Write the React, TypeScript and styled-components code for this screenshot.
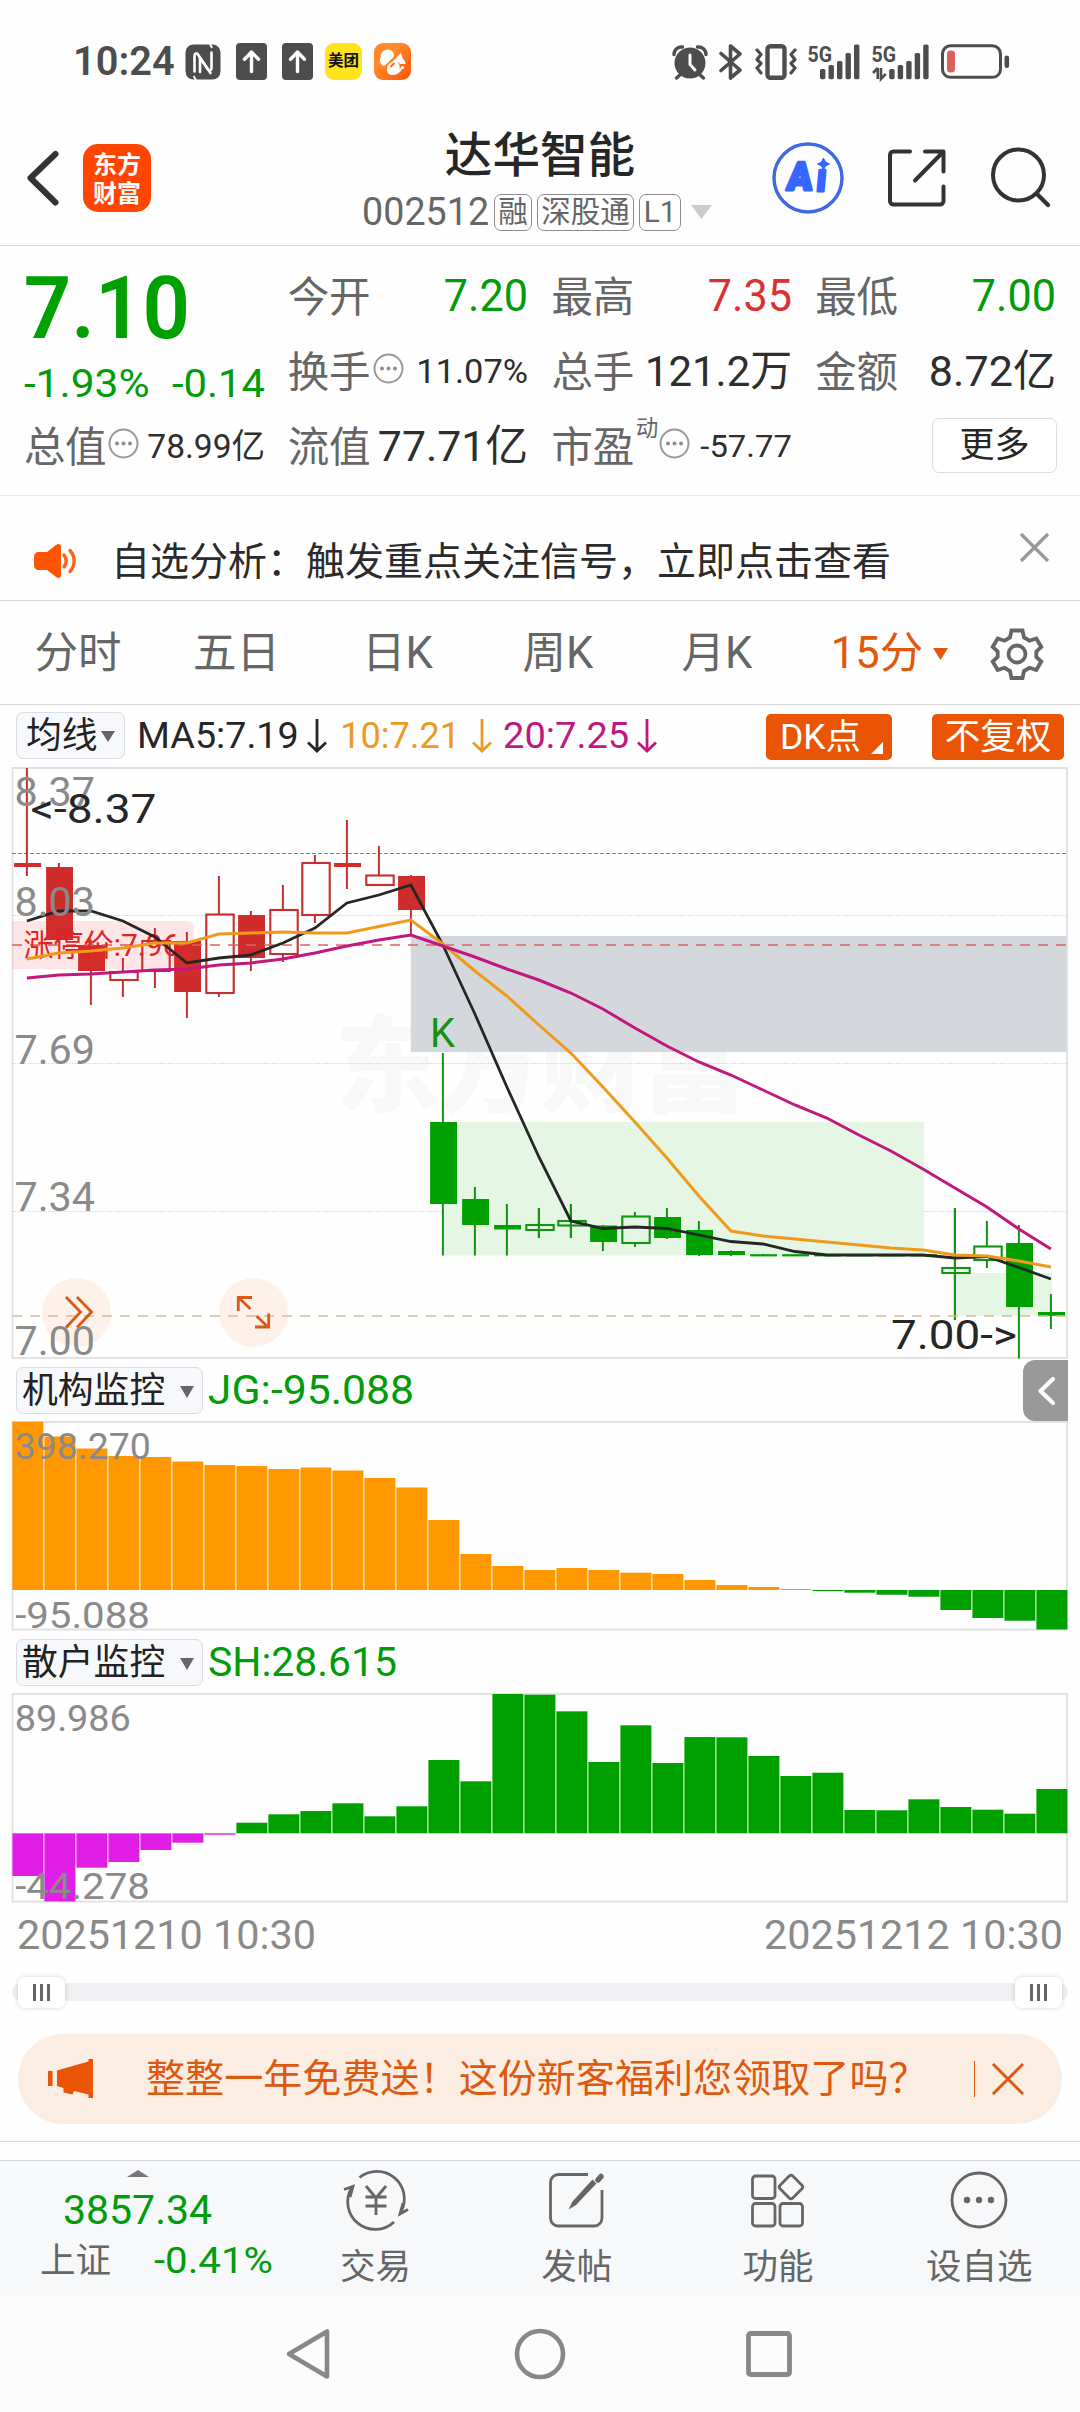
import React, { useLayoutEffect, useRef, useState } from "react";
import styled, { createGlobalStyle } from "styled-components";

const FONT = `Roboto, "Noto Sans CJK SC", "Noto Sans", sans-serif`;
const GREEN = "#009c0a";
const SOLID_GREEN = "#00a000";
const ORANGE = "#e95504";
const GRAY = "#666666";
const AXIS = "#8a8a8a";

const GlobalStyle = createGlobalStyle`
  * { box-sizing: border-box; }
  body { margin: 0; background: #fefefe; }
  svg { display: block; flex: none; overflow: visible; }
`;

const Page = styled.main`
  width: 1080px;
  height: 2412px;
  display: flex;
  flex-direction: column;
  background: #fefefe;
  font-family: ${FONT};
  overflow: hidden;
`;

/* ---------- fitted text ---------- */

const FitBox = styled.span<{ $w: number; $size: number; $color: string; $weight: number }>`
  display: block;
  flex: none;
  width: ${(p) => p.$w}px;
  height: ${(p) => p.$size}px;
  line-height: ${(p) => p.$size}px;
  font-size: ${(p) => p.$size}px;
  font-weight: ${(p) => p.$weight};
  color: ${(p) => p.$color};
  white-space: nowrap;
`;

const FitInner = styled.span`
  display: inline-block;
  vertical-align: top;
  line-height: inherit;
  transform-origin: 0 50%;
`;

type FitProps = { w: number; size: number; color?: string; weight?: number; children: string };

/* Condenses or widens its text so that it fills exactly the given width. */
function Fit({ w, size, color = "#2e2e2e", weight = 400, children }: FitProps) {
  const ref = useRef<HTMLSpanElement>(null);
  const [scale, setScale] = useState(1);
  useLayoutEffect(() => {
    if (ref.current) setScale(w / (ref.current.offsetWidth - size * 0.1));
  }, [w, size, children]);
  return (
    <FitBox $w={w} $size={size} $color={color} $weight={weight}>
      <FitInner ref={ref} style={{ transform: `translateX(${-size * 0.05 * scale}px) scaleX(${scale})` }}>
        {children}
      </FitInner>
    </FitBox>
  );
}

/* ---------- status bar ---------- */

const StatusBar = styled.header`
  height: 100px;
  padding: 23px 70px 0 75px;
  display: flex;
  align-items: center;
  justify-content: space-between;
`;

const StatusGroup = styled.div<{ $gap: number }>`
  display: flex;
  align-items: center;
  gap: ${(p) => p.$gap}px;
`;

const UploadBadge = styled.span`
  width: 31px;
  height: 37px;
  margin-left: 3px;
  border-radius: 4px;
  background: #4d4d4d;
`;

const AppBadge = styled.span<{ $bg: string }>`
  width: 37px;
  height: 37px;
  border-radius: 9px;
  background: ${(p) => p.$bg};
  display: flex;
  align-items: center;
  justify-content: center;
  font-size: 15.5px;
  font-weight: 700;
  line-height: 1;
  color: #111;
  white-space: nowrap;
`;

const UploadIcon = () => (
  <UploadBadge>
    <svg width="31" height="37" viewBox="0 0 31 37">
      <path d="M15.5 28.5V10M8.5 16.2l7-7.2 7 7.2" fill="none" stroke="#fff" strokeWidth="3.4" strokeLinecap="round" strokeLinejoin="round" />
    </svg>
  </UploadBadge>
);

const signalBars = [10.3, 14.3, 18.3, 26.3, 34.7];

const Signal = ({ data }: { data?: boolean }) => (
  <svg width={data ? 57 : 52} height="36" viewBox={`0 0 ${data ? 57 : 52} 36`} fill="#4d4d4d">
    <text x="-0.5" y="17.5" fontFamily="Roboto, sans-serif" fontWeight="700" fontSize="22.5" textLength="24.5" lengthAdjust="spacingAndGlyphs">5G</text>
    {signalBars.map((h, i) => (
      <rect key={h} x={(data ? 17.2 : 12) + i * 8.5} y={35.2 - h} width="5.4" height={h} rx="1.6" />
    ))}
    {data && <path d="M5.8 24v11M1 29l4.8-5M9 24v11l4.8-5.2" fill="none" stroke="#4d4d4d" strokeWidth="2.6" />}
  </svg>
);

/* ---------- title bar ---------- */

const TitleBar = styled.nav`
  height: 146px;
  display: grid;
  grid-template-columns: 1fr 380px 1fr;
  border-bottom: 1px solid #d6d6d6;
`;

const TitleSide = styled.div<{ $end?: boolean }>`
  display: flex;
  align-items: center;
  justify-content: ${(p) => (p.$end ? "flex-end" : "flex-start")};
  padding: ${(p) => (p.$end ? "11px 30px 0 0" : "11px 0 0 26px")};
`;

const BrandLogo = styled.div`
  width: 68px;
  height: 68px;
  margin-left: 24px;
  border-radius: 15px;
  background: #ff4500;
  color: #fff;
  display: flex;
  flex-direction: column;
  align-items: center;
  padding-top: 7px;
  font-size: 24px;
  line-height: 29px;
  font-weight: 700;
`;

const TitleCenter = styled.div`
  display: flex;
  flex-direction: column;
  align-items: center;
  padding-top: 32px;
`;

const StockName = styled.h1`
  margin: 0;
  font-size: 47.6px;
  line-height: 48px;
  font-weight: 500;
  color: #262626;
`;

const CodeRow = styled.div`
  margin-top: 14px;
  height: 36px;
  display: flex;
  align-items: center;
  align-self: flex-start;
  padding-left: 14px;
`;

const Tag = styled.span<{ $w: number; $ml: number }>`
  width: ${(p) => p.$w}px;
  height: 37px;
  margin-left: ${(p) => p.$ml}px;
  border: 1px solid #8c8c8c;
  border-radius: 7px;
  display: flex;
  align-items: center;
  justify-content: center;
  font-size: 29.5px;
  line-height: 1;
  padding-top: 2px;
  color: ${GRAY};
  white-space: nowrap;
`;

const TriangleSlot = styled.span`
  margin-left: 10px;
`;

const HeaderIcons = styled.div`
  display: flex;
  align-items: center;
  gap: 43px;
`;

/* ---------- quote ---------- */

const Quote = styled.section`
  height: 250px;
  padding: 12px 26px 0;
  display: grid;
  grid-template-columns: repeat(4, 236.6px);
  grid-template-rows: repeat(3, 75px);
  column-gap: 27.2px;
  border-bottom: 1px solid #e8e8e8;
`;

const PriceBlock = styled.div`
  grid-row: span 2;
  display: flex;
  flex-direction: column;
  gap: 13px;
  padding: 6px 0 0 2px;
`;

const ChangeRow = styled.div`
  display: flex;
  justify-content: space-between;
  margin-left: -2px;
`;

const Cell = styled.div`
  display: flex;
  align-items: center;
  min-width: 0;
`;

const CellLabel = styled.span`
  margin-left: -2px;
  font-size: 41.5px;
  line-height: 42px;
  letter-spacing: -0.4px;
  color: ${GRAY};
  padding-top: 4px;
  white-space: nowrap;
`;

const CellValue = styled.div`
  margin-left: auto;
  padding-top: 1px;
`;

const Super = styled.sup`
  align-self: flex-start;
  margin: 9px 0 0 2px;
  font-size: 22.5px;
  line-height: 23px;
  color: ${GRAY};
`;

const MoreButton = styled.button`
  width: 125px;
  height: 55px;
  margin: 0 -3px 0 auto;
  padding: 0 0 1px;
  border: 1.5px solid #dedede;
  border-radius: 7px;
  background: #fff;
  font: 400 35px/1 ${FONT};
  color: #262626;
`;

const InfoSvg = styled.svg<{ $ml: number }>`
  margin-left: ${(p) => p.$ml}px;
  margin-top: -4px;
`;

const InfoDot = ({ ml }: { ml: number }) => (
  <InfoSvg $ml={ml} width="31" height="31" viewBox="0 0 31 31">
    <circle cx="15.5" cy="15.5" r="14" fill="none" stroke="#999" strokeWidth="2" />
    {[9, 15.5, 22].map((x) => (
      <circle key={x} cx={x} cy="15.5" r="2" fill="#8c8c8c" />
    ))}
  </InfoSvg>
);

/* ---------- notice, tabs ---------- */

const Notice = styled.section`
  height: 105px;
  padding: 25px 31px 0 34px;
  display: flex;
  align-items: center;
  border-bottom: 1px solid #d6d6d6;
`;

const NoticeText = styled.p`
  margin: 3px 0 0 32px;
  flex: 1;
  font-size: 39px;
  line-height: 40px;
  color: #2b2b2b;
  white-space: nowrap;
`;

const NoticeClose = styled.svg`
  margin-top: -27px;
`;

const Tabs = styled.nav`
  height: 104px;
  display: grid;
  grid-template-columns: 158px 159px 163px 158px 160px 185px 70px;
  border-bottom: 1px solid #d6d6d6;
`;

const Tab = styled.div<{ $active?: boolean }>`
  display: flex;
  align-items: center;
  justify-content: center;
  gap: 10px;
  padding: 3px 2px 0 0;
  font-size: 43.5px;
  line-height: 1;
  color: ${(p) => (p.$active ? "#e0580c" : GRAY)};
  white-space: nowrap;
`;

/* ---------- charts ---------- */

const LegendBar = styled.div`
  height: 61px;
  padding-left: 16px;
  display: flex;
  align-items: center;
`;

const Picker = styled.div<{ $w: number; $pad: number; $gap: number }>`
  width: ${(p) => p.$w}px;
  height: 47px;
  display: flex;
  align-items: center;
  gap: ${(p) => p.$gap}px;
  padding: 2px 0 0 ${(p) => p.$pad}px;
  margin-right: ${(p) => (p.$gap > 8 ? 7 : 14)}px;
  flex: none;
  border: 1px solid #dadde1;
  border-radius: 7px;
  background: #f7f8fb;
  font-size: 35.8px;
  line-height: 1;
  color: #222;
  white-space: nowrap;
`;

const Legend = styled.div<{ $gap: number; $mr: number }>`
  display: flex;
  align-items: center;
  gap: ${(p) => p.$gap}px;
  margin-right: ${(p) => p.$mr}px;
`;

const Chip = styled.button<{ $w: number; $left?: boolean }>`
  width: ${(p) => p.$w}px;
  height: 46px;
  padding: ${(p) => (p.$left ? "0 0 0 14px" : "0")};
  margin: 2px 0 0;
  border: 0;
  border-radius: 5px;
  background: ${ORANGE};
  color: #fff;
  font: 400 35.5px/46px ${FONT};
  display: flex;
  align-items: flex-end;
  justify-content: ${(p) => (p.$left ? "flex-start" : "center")};
  gap: 10px;
  white-space: nowrap;
`;

const CornerMark = styled.svg`
  margin-bottom: 6px;
`;

const Chips = styled.div`
  display: flex;
  gap: 40px;
  margin-left: auto;
  padding-right: 16px;
`;

const ChartFrame = styled.section<{ $h: number }>`
  position: relative;
  height: ${(p) => p.$h}px;
  flex: none;
`;

const ChartSvg = styled.svg`
  position: relative;
`;

const RoundButton = styled.button<{ $x: number }>`
  position: absolute;
  left: ${(p) => p.$x}px;
  bottom: 13px;
  width: 69px;
  height: 69px;
  padding: 0;
  border: 0;
  border-radius: 50%;
  background: #fef1e9;
`;

const SideToggle = styled.button`
  width: 45px;
  height: 61px;
  margin: 0 12px 0 auto;
  padding: 0;
  border: 0;
  border-radius: 12px 0 0 12px;
  background: #999;
`;

const Dates = styled.div`
  height: 62px;
  padding: 0 19px;
  display: flex;
  align-items: center;
  justify-content: space-between;
`;

const SliderRow = styled.div`
  height: 52px;
  padding: 0 12px;
  display: flex;
  align-items: center;
`;

const Track = styled.div`
  flex: 1;
  height: 18px;
  border-radius: 9px;
  background: #f0f0f3;
  display: flex;
  align-items: center;
  justify-content: space-between;
  padding: 0 6px;
`;

const Thumb = styled.div`
  width: 47px;
  height: 31px;
  border-radius: 7px;
  background: #fff;
  box-shadow: 0 0 5px rgba(0, 0, 0, 0.16);
  display: flex;
  align-items: center;
  justify-content: center;
  gap: 4.6px;
`;

const Grip = styled.i`
  width: 2.5px;
  height: 17px;
  background: #666;
`;

const Promo = styled.aside`
  height: 90px;
  margin: 16px 18px 17px;
  padding: 0 38px 0 30px;
  border-radius: 45px;
  background: #fcede3;
  display: flex;
  align-items: center;
`;

const PromoText = styled.p`
  margin: 0 0 0 52px;
  flex: 1;
  font-size: 39.1px;
  line-height: 40px;
  color: #dc5a10;
  white-space: nowrap;
`;

const PromoRule = styled.span`
  width: 1px;
  height: 36px;
  margin-right: 17px;
  background: #dc5a10;
`;

/* ---------- bottom ---------- */

const Gap = styled.div`
  height: 19px;
  border-top: 1px solid #d2d5d8;
`;

const BottomBar = styled.nav`
  height: 136px;
  display: grid;
  grid-template-columns: 275px repeat(4, 201.2px);
  border-top: 1px solid #d0d4d8;
  background: #f7f8fa;
`;

const IndexBlock = styled.div`
  display: flex;
  flex-direction: column;
  align-items: center;
  gap: 13px;
  padding-top: 9px;
`;

const IndexRow = styled.div`
  width: 275px;
  padding: 0 4px 0 40px;
  margin-top: -2px;
  display: flex;
  align-items: center;
  justify-content: space-between;
`;

const IndexName = styled.span`
  font-size: 35.5px;
  line-height: 36px;
  padding-top: 1px;
  color: ${GRAY};
`;

const BottomItem = styled.div`
  display: flex;
  flex-direction: column;
  align-items: center;
  padding-top: 10px;
  gap: 20px;
  font-size: 35.5px;
  line-height: 36px;
  color: ${GRAY};
`;

const SystemNav = styled.footer`
  height: 116px;
  display: flex;
  align-items: center;
  justify-content: center;
  gap: 180px;
  background: #fcfcfc;
`;

const Down = ({ w, h, color }: { w: number; h: number; color: string }) => (
  <svg width={w} height={h} viewBox="0 0 10 10" preserveAspectRatio="none">
    <path d="M0 0h10L5 10z" fill={color} />
  </svg>
);

const DownArrow = ({ color }: { color: string }) => (
  <svg width="20" height="34" viewBox="0 0 20 34">
    <path d="M10 0v32M1 23.5l9 8.5 9-8.5" fill="none" stroke={color} strokeWidth="2.8" />
  </svg>
);

/* ---------- chart data (in screen units) ---------- */

const cx = (i: number) => 26.9 + 32 * i;

type Candle = [high: number, top: number, bottom: number, low: number, hollow?: 1];

const candles: Candle[] = [
  [768, 863, 867, 876], [863, 867, 940, 940], [940, 945, 971, 1005], [958, 972, 980, 997, 1],
  [928, 941, 971, 988, 1], [932, 941, 992, 1018], [876, 914.5, 993, 997, 1], [911, 915, 958, 971],
  [885, 910, 954, 962, 1], [855, 863, 915, 923, 1], [820, 863, 867, 889], [846, 875.5, 885, 885, 1],
  [875, 876, 910, 936], [1053, 1122, 1204, 1255.5], [1187, 1199, 1225, 1255.5], [1204, 1225, 1229.5, 1255.5],
  [1208, 1225, 1230, 1238, 1], [1204, 1221, 1225.5, 1238, 1], [1225, 1225.5, 1242, 1251], [1212, 1216.5, 1243, 1247, 1],
  [1208, 1217, 1238, 1239], [1221, 1230, 1255, 1256], [1250.5, 1251, 1255, 1256], [1254, 1254.2, 1256.4, 1256],
  [1254, 1254.2, 1256.4, 1256], [1254, 1254.2, 1256.4, 1256], [1254, 1254.2, 1256.4, 1256], [1254, 1254.2, 1256.4, 1256],
  [1254, 1254.2, 1256.4, 1256], [1208, 1268, 1273, 1320, 1], [1221, 1246.5, 1260, 1268, 1], [1225, 1243, 1307, 1358.5],
  [1294, 1312, 1315.8, 1329],
];

const ma5 = [921, 911, 911, 921, 937, 963, 958, 955, 943, 928, 903, 895, 885, 945, 1014, 1087, 1157, 1221, 1228.5, 1227, 1228.5, 1235, 1241.5, 1244, 1251.5, 1255, 1255, 1255, 1255, 1258, 1256.5, 1267.5, 1279];
const ma10 = [959, 953, 951, 948, 943, 943, 934, 933, 932, 933, 933, 926.5, 920, 944, 971, 996, 1025, 1053, 1087, 1122, 1158, 1196, 1231, 1236, 1239, 1242, 1245, 1248, 1250, 1255, 1256, 1261, 1267];
const ma20 = [978, 975, 974, 972, 970, 969, 965, 963, 959, 953, 946, 940, 935, 946, 957, 969, 980, 993, 1009, 1028, 1046, 1062, 1075, 1090, 1105, 1118, 1135, 1151, 1169, 1188, 1207, 1229, 1249];

const jg = [1421.7, 1436.5, 1448.5, 1456, 1457, 1461.5, 1465, 1466, 1469, 1467.5, 1470.5, 1478, 1487.5, 1520, 1554, 1566, 1570, 1568, 1570, 1572.7, 1574, 1580, 1585, 1587, 1589, 1591, 1592.7, 1594.7, 1596.7, 1610, 1618, 1620.7, 1629.5];
const sh = [1876, 1901.5, 1867.7, 1862, 1850, 1842.7, 1834.7, 1822.7, 1814.3, 1811, 1803.3, 1816.3, 1806.3, 1760, 1781.3, 1694, 1694.7, 1711.3, 1762, 1725.3, 1763, 1737, 1737.3, 1756, 1776, 1772.7, 1810, 1810.3, 1799.3, 1807, 1809.7, 1813.7, 1789];

const line = (ys: number[]) => ys.map((y, i) => `${cx(i)},${y}`).join(" ");

type LabelProps = { x: number; y: number; w: number; size?: number; color?: string; children: string };

const ChartText = ({ x, y, w, size = 40.5, color = AXIS, children }: LabelProps) => (
  <text x={x - size * 0.05} y={y} fontFamily={FONT} fontSize={size} fill={color} textLength={w + size * 0.1} lengthAdjust="spacingAndGlyphs">
    {children}
  </text>
);

const Frame = ({ top, bottom }: { top: number; bottom: number }) => (
  <path d={`M12.5 ${top}H1067V${bottom}H12.5z`} fill="none" stroke="#e2e2e2" strokeWidth="1.8" />
);

const PriceChart = () => (
  <ChartSvg width="1080" height="594" viewBox="0 766 1080 594">
    <text x="335" y="1103" fontFamily={FONT} fontWeight="900" fontSize="105" fill="#f8f8f8" textLength="412">东方财富</text>
    <Frame top={768} bottom={1358} />
    {[915.5, 1063.5, 1211.5].map((y) => (
      <path key={y} d={`M12 ${y}H1067`} stroke="#cfcfcf" strokeWidth="1" strokeDasharray="1.2 1.4" />
    ))}
    <rect x="410.8" y="936" width="656" height="116" fill="#d4d8dd" />
    <rect x="443" y="1122" width="481" height="133.5" fill="#e5f6e5" />
    <rect x="956" y="1273" width="96" height="43" fill="#e5f6e5" />
    <path d="M12 853.5H1067" stroke="#c5703a" strokeWidth="1.2" strokeDasharray="4 2" />
    {candles.map(([high, top, bottom, low, hollow], i) => {
      const x = cx(i);
      const c = i < 13 ? "#c43030" : "#129312";
      return (
        <g key={i}>
          <path d={`M${x} ${high}V${hollow ? top : low}M${x} ${hollow ? bottom : low}V${low}`} stroke={c} strokeWidth="2" />
          {hollow ? (
            <rect x={x - 12.6} y={top} width="27.4" height={bottom - top} fill="none" stroke={c} strokeWidth="2.1" />
          ) : (
            <rect x={x - 12.8} y={top} width="26.9" height={bottom - top} fill={i < 13 ? "#cf2c2c" : SOLID_GREEN} />
          )}
        </g>
      );
    })}
    {[16, 17, 29].map((i) => (
      <path key={i} d={`M${cx(i)} ${candles[i][0]}V${candles[i][3]}`} stroke="#129312" strokeWidth="2" />
    ))}
    <path d="M12 945H1067" stroke="#d86464" strokeWidth="1.7" strokeDasharray="10 8" />
    <path d="M12 1316H1067" stroke="#d2bf98" strokeWidth="1.5" strokeDasharray="10 8" />
    <path d="M12.5 921H188a6 6 0 0 1 6 6V963a6 6 0 0 1-6 6H12.5z" fill="#ff2020" fillOpacity="0.11" />
    <ChartText x={25} y={956} w={153} size={31} color="#e02424">涨停价:7.96</ChartText>
    <polyline points={line(ma5)} fill="none" stroke="#262626" strokeWidth="2.8" />
    <polyline points={line(ma10)} fill="none" stroke="#f09a1c" strokeWidth="3" />
    <polyline points={line(ma20)} fill="none" stroke="#c0187e" strokeWidth="3" />
    <path d="M66 1297l14.5 15L66 1327.5M77 1297l14.5 15L77 1327.5M250.5 1309L239 1298M238.3 1311v-13.5h13.7M256.5 1316l11.5 11M268.7 1313.5v13.5h-13.7" fill="none" stroke="#d85a18" strokeWidth="2.8" />
    <ChartText x={16.5} y={805.5} w={76.5}>8.37</ChartText>
    <ChartText x={16.5} y={915.5} w={76.5}>8.03</ChartText>
    <ChartText x={16.5} y={1063.5} w={76.5}>7.69</ChartText>
    <ChartText x={16.5} y={1210.5} w={76.5}>7.34</ChartText>
    <ChartText x={16.5} y={1354.5} w={76.5}>7.00</ChartText>
    <ChartText x={32.5} y={823} w={122} size={40} color="#262626">{"<-8.37"}</ChartText>
    <ChartText x={893} y={1349} w={122} size={40} color="#262626">{"7.00->"}</ChartText>
    <ChartText x={432} y={1047} w={21} size={40} color="#129312">K</ChartText>
  </ChartSvg>
);

type BarsProps = { ys: number[]; zero: number; up: string; down: string };

const Bars = ({ ys, zero, up, down }: BarsProps) => (
  <>
    {ys.map((y, i) => (
      <rect key={i} x={12.4 + 32 * i} y={Math.min(y, zero)} width="31" height={Math.abs(y - zero)} fill={y < zero ? up : down} />
    ))}
  </>
);

const icon = { fill: "none", stroke: GRAY, strokeWidth: 2.8 } as const;

export default function App() {
  return (
    <Page>
      <GlobalStyle />
      <StatusBar>
        <StatusGroup $gap={12}>
          <Fit w={98} size={40.5} weight={600} color="#4d4d4d">10:24</Fit>
          <svg width="36" height="36" viewBox="0 0 36 36">
            <rect x="0.5" y="0.5" width="35" height="35" rx="8" fill="#4d4d4d" />
            <path d="M9.5 27.500V12c0-2.500 1.500-3.500 3.500-1.500L25.500 29" fill="none" stroke="#fff" strokeWidth="2.600" strokeLinecap="round" />
            <path d="M26.500 8.500V24c0 2.500-1.500 3.500-3.500 1.500L15 14v14" fill="none" stroke="#fff" strokeWidth="2.600" strokeLinecap="round" />
            <path d="M11 36l-2.500-4M25 0l2 4" stroke="#fff" strokeWidth="1.800" />
          </svg>
          <UploadIcon />
          <UploadIcon />
          <AppBadge $bg="#ffe31e">美团</AppBadge>
          <AppBadge $bg="linear-gradient(135deg,#ff8a2a 35%,#ff5208)">
            <svg width="37" height="37" viewBox="0 0 37 37" fill="#fff">
              <path d="M8 22C5 19 5.500 15.500 7 14c-1-4 3-7.500 7-7.500 3.500 0 6 2.500 6 5.500 0 2-1 3-2.500 4L11 22.500c-1 .8-2.200.5-3-.5z" />
              <path d="M13 24L27 10l1.500 5L17 27z" />
              <path d="M24 13c4 1 7.500 4 7.500 8H26l-3-4z" />
              <path d="M13 27c0-5 3-8.500 7.500-8.500 3.500 0 6 3 5 7l3-1c-1 4-5 7.500-10 7.500-3 0-5.500-2-5.500-5z" />
              <path d="M16.500 24l4-4" stroke="#ff6a18" strokeWidth="2" />
              <circle cx="28.500" cy="24.500" r="1.600" />
            </svg>
          </AppBadge>
        </StatusGroup>
        <StatusGroup $gap={11.500}>
          <svg width="36" height="36" viewBox="0 0 36 36" fill="#4d4d4d">
            <circle cx="18" cy="19" r="15.500" />
            <path d="M8.500 30.500l-4 3.500M27.500 30.500l4 3.500M2 10.500a7.500 7.500 0 0 1 8.500-7.500M34 10.500a7.500 7.500 0 0 0-8.500-7.500" fill="none" stroke="#4d4d4d" strokeWidth="3.400" strokeLinecap="round" />
            <path d="M18 11v9.500l5 5.500" fill="none" stroke="#fff" strokeWidth="3" strokeLinecap="round" />
          </svg>
          <svg width="24" height="36" viewBox="0 0 24 36">
            <path d="M2 9.500L21 26l-9.500 8V2l9.500 8L2 26.500" fill="none" stroke="#4d4d4d" strokeWidth="3.600" strokeLinejoin="round" strokeLinecap="round" />
          </svg>
          <svg width="42" height="36" viewBox="0 0 42 36">
            <rect x="12.500" y="2.300" width="17" height="31.500" rx="3" fill="none" stroke="#4d4d4d" strokeWidth="4.400" />
            <path d="M2 6l4 4.500-4 5 4 4-4 4.500 4 5M40 6l-4 4.500 4 5-4 4 4 4.500-4 5" fill="none" stroke="#4d4d4d" strokeWidth="3.200" strokeLinecap="round" strokeLinejoin="round" />
          </svg>
          <Signal />
          <Signal data />
          <svg width="70" height="36" viewBox="0 0 70 36">
            <rect x="2.500" y="1.800" width="58" height="31.500" rx="8" fill="none" stroke="#4d4d4d" strokeWidth="3" />
            <rect x="7" y="6.500" width="8" height="22" rx="3.500" fill="#d9625c" />
            <rect x="64.500" y="11.500" width="4.600" height="12.500" rx="2.200" fill="#4d4d4d" />
          </svg>
        </StatusGroup>
      </StatusBar>

      <TitleBar>
        <TitleSide>
          <svg width="33" height="56" viewBox="0 0 33 56">
            <path d="M29.500 4L4.500 28l25 24.500" fill="none" stroke="#333" strokeWidth="6" strokeLinecap="round" strokeLinejoin="round" />
          </svg>
          <BrandLogo>
            <span>东方</span>
            <span>财富</span>
          </BrandLogo>
        </TitleSide>
        <TitleCenter>
          <StockName>达华智能</StockName>
          <CodeRow>
            <Fit w={123} size={39.500} color={GRAY}>002512</Fit>
            <Tag $w={38} $ml={7}>融</Tag>
            <Tag $w={97} $ml={5}>深股通</Tag>
            <Tag $w={42} $ml={5}>L1</Tag>
            <TriangleSlot>
              <Down w={21} h={14} color="#ccc" />
            </TriangleSlot>
          </CodeRow>
        </TitleCenter>
        <TitleSide $end>
          <HeaderIcons>
            <svg width="72" height="72" viewBox="0 0 72 72">
              <circle cx="36" cy="36" r="34" fill="none" stroke="#4068e4" strokeWidth="3.400" />
              <g fill="#3765ff" stroke="#3765ff" strokeWidth="3.200" strokeLinejoin="round" fontFamily="Roboto, sans-serif" fontWeight="900" fontSize="39">
                <text x="15.500" y="48.500" textLength="25" lengthAdjust="spacingAndGlyphs" transform="skewX(-5) translate(3 0)">A</text>
                <text x="45" y="49.500" textLength="9.500" lengthAdjust="spacingAndGlyphs" transform="skewX(-5) translate(3 0)">ı</text>
              </g>
              <path d="M51.500 16l2 4 4 2-4 2-2 4-2-4-4-2 4-2z" fill="#3765ff" stroke="#3765ff" strokeWidth="1" />
            </svg>
            <svg width="60" height="60" viewBox="0 0 60 60">
              <path d="M23 3.500H6.500a3.500 3.500 0 0 0-3.500 3.500V53a3.500 3.500 0 0 0 3.500 3.500H53a3.500 3.500 0 0 0 3.500-3.500V38.500M38 3.500H56.500V23.500M56 4L28 32.500" fill="none" stroke="#333" strokeWidth="4" strokeLinecap="round" strokeLinejoin="round" />
            </svg>
            <svg width="60" height="60" viewBox="0 0 60 60">
              <circle cx="28.500" cy="27" r="25.500" fill="none" stroke="#333" strokeWidth="4" />
              <path d="M47 46l11 11" stroke="#333" strokeWidth="4.200" strokeLinecap="round" />
            </svg>
          </HeaderIcons>
        </TitleSide>
      </TitleBar>

      <Quote>
        <PriceBlock>
          <Fit w={158} size={88} weight={600} color={SOLID_GREEN}>7.10</Fit>
          <ChangeRow>
            <Fit w={121} size={39} color={GREEN}>-1.93%</Fit>
            <Fit w={89} size={39} color={GREEN}>-0.14</Fit>
          </ChangeRow>
        </PriceBlock>
        <Cell>
          <CellLabel>今开</CellLabel>
          <CellValue><Fit w={80} size={44} color={GREEN}>7.20</Fit></CellValue>
        </Cell>
        <Cell>
          <CellLabel>最高</CellLabel>
          <CellValue><Fit w={80} size={44} color="#d93030">7.35</Fit></CellValue>
        </Cell>
        <Cell>
          <CellLabel>最低</CellLabel>
          <CellValue><Fit w={80} size={44} color={GREEN}>7.00</Fit></CellValue>
        </Cell>
        <Cell>
          <CellLabel>换手</CellLabel>
          <InfoDot ml={3} />
          <CellValue><Fit w={108} size={34}>11.07%</Fit></CellValue>
        </Cell>
        <Cell>
          <CellLabel>总手</CellLabel>
          <CellValue><Fit w={143} size={43}>121.2万</Fit></CellValue>
        </Cell>
        <Cell>
          <CellLabel>金额</CellLabel>
          <CellValue><Fit w={123} size={43}>8.72亿</Fit></CellValue>
        </Cell>
        <Cell>
          <CellLabel>总值</CellLabel>
          <InfoDot ml={2} />
          <CellValue><Fit w={114} size={34}>78.99亿</Fit></CellValue>
        </Cell>
        <Cell>
          <CellLabel>流值</CellLabel>
          <CellValue><Fit w={146} size={43}>77.71亿</Fit></CellValue>
        </Cell>
        <Cell>
          <CellLabel>市盈</CellLabel>
          <Super>动</Super>
          <InfoDot ml={1} />
          <CellValue><Fit w={88} size={32}>-57.77</Fit></CellValue>
        </Cell>
        <Cell>
          <MoreButton>更多</MoreButton>
        </Cell>
      </Quote>

      <Notice>
        <svg width="45" height="36" viewBox="0 0 45 36">
          <path d="M5 9h8L22 2c3-2 5-1 5 2v28c0 3-2 4-5 2l-9-7H5c-3 0-5-2-5-5v-8c0-3 2-5 5-5z" fill="#ff5500" />
          <path d="M30 12c3 4 3 8 0 12M36 7.500c5.500 6 5.500 15 0 21" fill="none" stroke="#ff6414" strokeWidth="3.400" strokeLinecap="round" />
        </svg>
        <NoticeText>自选分析：触发重点关注信号，立即点击查看</NoticeText>
        <NoticeClose width="29" height="29" viewBox="0 0 29 29">
          <path d="M1 1l27 27M28 1L1 28" stroke="#999" strokeWidth="3.200" />
        </NoticeClose>
      </Notice>

      <Tabs>
        <Tab>分时</Tab>
        <Tab>五日</Tab>
        <Tab>日K</Tab>
        <Tab>周K</Tab>
        <Tab>月K</Tab>
        <Tab $active>
          15分
          <Down w={15} h={12} color="#e0580c" />
        </Tab>
        <Tab>
          <svg width="52" height="52" viewBox="0 0 52 52" fill="none" stroke={GRAY} strokeWidth="3.800">
            <path d="M20.500 2.500h11l1.500 7 5.500 3.200 6.800-2.200 5 8.500-5 4.500v5.500l5 4.500-5 8.500-6.800-2.200-5.500 3.200-1.500 7h-11l-1.500-7-5.500-3.200-6.800 2.200-5-8.500 5-4.500v-5.500l-5-4.500 5-8.500 6.800 2.200L19 9.500z" />
            <circle cx="26" cy="26" r="8.500" />
          </svg>
        </Tab>
      </Tabs>

      <LegendBar>
        <Picker $w={109} $pad={9} $gap={3}>
          均线
          <Down w={14} h={11} color={GRAY} />
        </Picker>
        <Legend $gap={10} $mr={15}>
          <Fit w={158} size={37.500} color="#262626">MA5:7.19</Fit>
          <DownArrow color="#262626" />
        </Legend>
        <Legend $gap={14} $mr={13}>
          <Fit w={116} size={37.500} color="#ec9a24">10:7.21</Fit>
          <DownArrow color="#ec9a24" />
        </Legend>
        <Legend $gap={10} $mr={0}>
          <Fit w={122} size={37.500} color="#c0187e">20:7.25</Fit>
          <DownArrow color="#c0187e" />
        </Legend>
        <Chips>
          <Chip $w={126} $left>
            DK点
            <CornerMark width="12" height="12" viewBox="0 0 12 12">
              <path d="M12 0v12H0z" fill="#fff" />
            </CornerMark>
          </Chip>
          <Chip $w={132}>不复权</Chip>
        </Chips>
      </LegendBar>

      <ChartFrame $h={594}>
        <RoundButton $x={42} aria-label="forward" />
        <RoundButton $x={219} aria-label="expand" />
        <PriceChart />
      </ChartFrame>

      <LegendBar>
        <Picker $w={187} $pad={5} $gap={15}>
          机构监控
          <Down w={14} h={12} color={GRAY} />
        </Picker>
        <Fit w={202} size={40} color={GREEN}>JG:-95.088</Fit>
        <SideToggle aria-label="open panel">
          <svg width="45" height="61" viewBox="0 0 45 61">
            <path d="M30 19L17.500 31 30 43" fill="none" stroke="#fff" strokeWidth="4.200" strokeLinecap="round" strokeLinejoin="round" />
          </svg>
        </SideToggle>
      </LegendBar>
      <ChartFrame $h={211}>
        <svg width="1080" height="211" viewBox="0 1421 1080 211">
          <Frame top={1422} bottom={1629.500} />
          <Bars ys={jg} zero={1590} up="#ff9700" down={SOLID_GREEN} />
          <ChartText x={16.500} y={1459} w={132.500} size={37.500}>398.270</ChartText>
          <ChartText x={17} y={1627.500} w={131} size={37.500}>-95.088</ChartText>
        </svg>
      </ChartFrame>

      <LegendBar>
        <Picker $w={187} $pad={5} $gap={15}>
          散户监控
          <Down w={14} h={12} color={GRAY} />
        </Picker>
        <Fit w={185} size={40} color={GREEN}>SH:28.615</Fit>
      </LegendBar>
      <ChartFrame $h={211}>
        <svg width="1080" height="211" viewBox="0 1693 1080 211">
          <Frame top={1694} bottom={1901.500} />
          <Bars ys={sh} zero={1833.300} up={SOLID_GREEN} down="#e01ee6" />
          <ChartText x={16.500} y={1731} w={112.500} size={37.500}>89.986</ChartText>
          <ChartText x={17} y={1899} w={131} size={37.500}>-44.278</ChartText>
        </svg>
      </ChartFrame>

      <Dates>
        <Fit w={295} size={40.500} color={AXIS}>20251210 10:30</Fit>
        <Fit w={295} size={40.500} color={AXIS}>20251212 10:30</Fit>
      </Dates>

      <SliderRow>
        <Track>
          <Thumb><Grip /><Grip /><Grip /></Thumb>
          <Thumb><Grip /><Grip /><Grip /></Thumb>
        </Track>
      </SliderRow>

      <Promo>
        <svg width="46" height="40" viewBox="0 0 46 40">
          <path d="M0 12h4.500v15H0zM9 11.500L40.500 2.500V0h4.500v39h-4.500v-3.500L26 32l-1.500 3.500-9-2V29L9 27z" fill={ORANGE} />
        </svg>
        <PromoText>整整一年免费送！这份新客福利您领取了吗？</PromoText>
        <PromoRule />
        <svg width="32" height="32" viewBox="0 0 32 32">
          <path d="M1 1l30 30M31 1L1 31" stroke="#dc5a10" strokeWidth="3" />
        </svg>
      </Promo>

      <Gap />
      <BottomBar>
        <IndexBlock>
          <svg width="22" height="7" viewBox="0 0 22 7">
            <path d="M11 0l11 7H0z" fill="#777" />
          </svg>
          <Fit w={145} size={41} color={GREEN}>3857.34</Fit>
          <IndexRow>
            <IndexName>上证</IndexName>
            <Fit w={115} size={37.500} color={GREEN}>-0.41%</Fit>
          </IndexRow>
        </IndexBlock>
        <BottomItem>
          <svg width="66" height="58" viewBox="0 0 66 58" {...icon}>
            <path d="M16.500 6.500A27.500 27.500 0 0 1 58.500 40M51 51A27.500 27.500 0 0 1 8.500 17M1 18.500L10 15.500L7 26M65 38.500L57 43L60 32" />
            <path d="M23 15l10 12 10-12M33 27v17M22.500 26h21M22.500 35h21" />
          </svg>
          交易
        </BottomItem>
        <BottomItem>
          <svg width="56" height="58" viewBox="0 0 56 58" {...icon}>
            <path d="M39 3.500H9.500a8 8 0 0 0-8 8V47a8 8 0 0 0 8 8H45a8 8 0 0 0 8-8V19" />
            <path d="M19.500 38.500l4-8L43.500 8.500l4 4L27 34z" fill={GRAY} stroke="none" />
            <path d="M49 9l3-3.500" strokeWidth="5.500" strokeLinecap="round" />
          </svg>
          发帖
        </BottomItem>
        <BottomItem>
          <svg width="54" height="58" viewBox="0 0 54 58" {...icon}>
            <rect x="1.500" y="5" width="22.500" height="22.500" rx="3" />
            <rect x="1.500" y="32.500" width="22.500" height="22.500" rx="3" />
            <rect x="29" y="32.500" width="22.500" height="22.500" rx="3" />
            <rect x="31" y="7" width="18" height="18" rx="2.500" transform="rotate(45 40 16)" />
          </svg>
          功能
        </BottomItem>
        <BottomItem>
          <svg width="58" height="58" viewBox="0 0 58 58" {...icon}>
            <circle cx="29" cy="29" r="27" />
            {[17, 29, 41].map((x) => (
              <circle key={x} cx={x} cy="29" r="3.200" fill={GRAY} stroke="none" />
            ))}
          </svg>
          设自选
        </BottomItem>
      </BottomBar>

      <SystemNav>
        <svg width="48" height="52" viewBox="0 0 48 52" fill="none" stroke="#888" strokeWidth="4.600" strokeLinejoin="round">
          <path d="M41 3.500v45L3 26z" />
        </svg>
        <svg width="52" height="52" viewBox="0 0 52 52" fill="none" stroke="#888" strokeWidth="4.600">
          <circle cx="26" cy="26" r="23" />
        </svg>
        <svg width="48" height="52" viewBox="0 0 48 52" fill="none" stroke="#888" strokeWidth="4.800">
          <rect x="2.500" y="5.500" width="41" height="41" rx="2" />
        </svg>
      </SystemNav>
    </Page>
  );
}
